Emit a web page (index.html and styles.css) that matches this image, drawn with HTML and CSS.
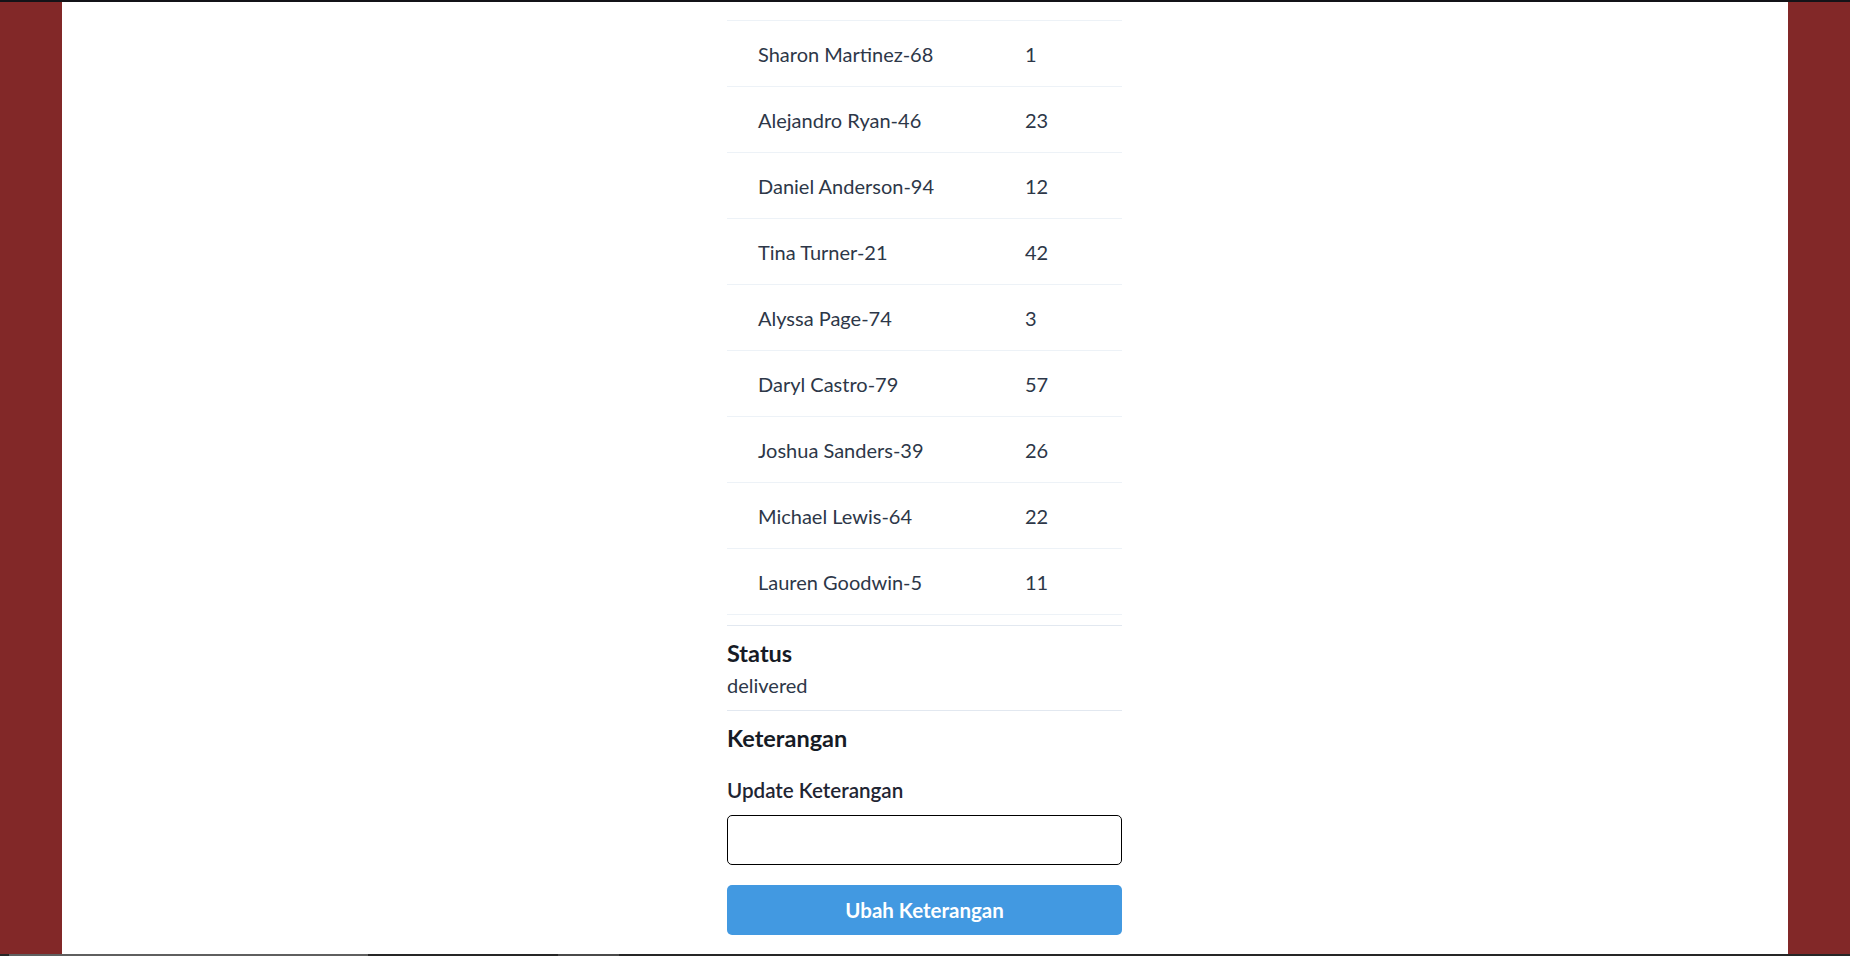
FILE: index.html
```html
<!DOCTYPE html>
<html lang="id">
<head>
<meta charset="utf-8">
<title>Detail Pesanan</title>
<link rel="stylesheet" href="styles.css">
</head>
<body>
<div class="topbar"></div>
<div class="frame">
  <div class="side"></div>
  <main class="main">
    <div class="column">
      <div class="table">
        <div class="row"><span class="name">Sharon Martinez-68</span><span class="qty">1</span></div>
        <div class="row"><span class="name">Alejandro Ryan-46</span><span class="qty">23</span></div>
        <div class="row"><span class="name">Daniel Anderson-94</span><span class="qty">12</span></div>
        <div class="row"><span class="name">Tina Turner-21</span><span class="qty">42</span></div>
        <div class="row"><span class="name">Alyssa Page-74</span><span class="qty">3</span></div>
        <div class="row"><span class="name">Daryl Castro-79</span><span class="qty">57</span></div>
        <div class="row"><span class="name">Joshua Sanders-39</span><span class="qty">26</span></div>
        <div class="row"><span class="name">Michael Lewis-64</span><span class="qty">22</span></div>
        <div class="row"><span class="name">Lauren Goodwin-5</span><span class="qty">11</span></div>
      </div>
      <section class="status">
        <h3 class="heading">Status</h3>
        <p class="value">delivered</p>
      </section>
      <section class="note">
        <h3 class="heading">Keterangan</h3>
        <form class="form">
          <label class="label" for="ket">Update Keterangan</label>
          <input class="input" id="ket" type="text">
          <button class="button" type="button">Ubah Keterangan</button>
        </form>
      </section>
    </div>
  </main>
  <div class="side"></div>
</div>
<div class="bottombar"><span class="seg seg-a"></span><span class="seg seg-b"></span></div>
</body>
</html>
```
FILE: styles.css
```css
html, body {
  margin: 0;
  padding: 0;
}
body {
  background: #822828;
  font-family: Lato, "Noto Sans", sans-serif;
  color: #2d3748;
  overflow: hidden;
}
.topbar {
  height: 2px;
  background: #131318;
}
.frame {
  display: flex;
  height: 952px;
}
.side {
  width: 62px;
  flex: none;
}
.main {
  flex: 1;
  background: #ffffff;
  overflow: hidden;
  padding-right: 1px;
}
.column {
  width: 395px;
  margin: 0 auto;
  padding-top: 18px;
}
.table {
  border-top: 1px solid #edf2f7;
}
.row {
  display: grid;
  grid-template-columns: 298px 1fr;
  align-items: center;
  height: 65px;
  border-bottom: 1px solid #edf2f7;
  font-size: 20px;
  line-height: 30px;
}
.name {
  padding-left: 31px;
}
.status {
  margin-top: 10px;
  border-top: 1px solid #e2e8f0;
  border-bottom: 1px solid #e2e8f0;
  padding: 12px 0 10px;
}
.heading {
  margin: 0;
  font-size: 23.5px;
  line-height: 30px;
  font-weight: 700;
  color: #161b26;
}
.value {
  margin: 2px 0 0;
  font-size: 20px;
  line-height: 30px;
}
.note {
  padding-top: 12px;
}
.form {
  display: flex;
  flex-direction: column;
  padding-top: 22px;
}
.label {
  font-size: 20.6px;
  line-height: 30px;
  font-weight: 600;
  color: #1f2533;
}
.input {
  margin-top: 10px;
  height: 50px;
  box-sizing: border-box;
  border: 1px solid #000000;
  border-radius: 5px;
  background: #fff;
  font: inherit;
  padding: 0 15px;
}
.button {
  margin-top: 20px;
  height: 50px;
  border: 0;
  border-radius: 5px;
  background: #4299e1;
  color: #ffffff;
  font-family: inherit;
  font-size: 20.5px;
  font-weight: 700;
}
.bottombar {
  height: 2px;
  background: #262626;
  position: relative;
}
.seg {
  position: absolute;
  top: 0;
  height: 2px;
}
.seg-a {
  left: 9px;
  width: 359px;
  background: #5f5f5f;
}
.seg-b {
  left: 558px;
  width: 61px;
  background: #4a4a4a;
}
```
